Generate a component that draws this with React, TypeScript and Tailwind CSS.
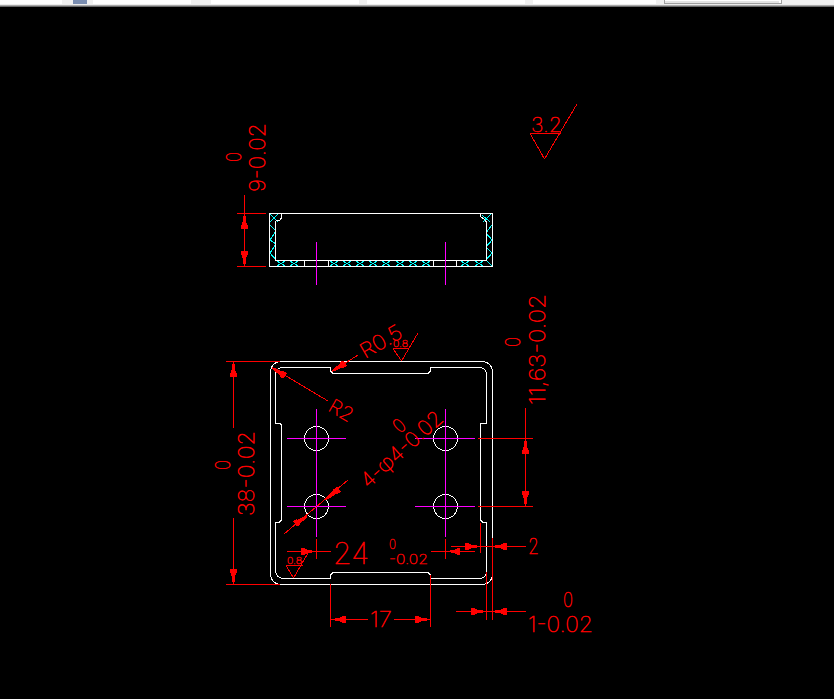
const RED = "#ff0000"
const WHITE = "#ffffff"
const MAGENTA = "#ff00ff"
const CYAN = "#00ffff"

type Pt = [number, number]

// head of a dimension line, thin at the tip and blocky at the back
function Arrow({ tip, back }: { tip: Pt; back: Pt }) {
  const dx = back[0] - tip[0]
  const dy = back[1] - tip[1]
  const len = Math.hypot(dx, dy)
  const nx = -dy / len
  const ny = dx / len
  const at = (t: number, w: number) => `${tip[0] + dx * t + nx * w},${tip[1] + dy * t + ny * w}`
  const points = [
    at(0, 0.5), at(0.3, 1.6), at(0.7, 2.2), at(0.72, 3), at(1, 3.4),
    at(1, -3.4), at(0.72, -3), at(0.7, -2.2), at(0.3, -1.6), at(0, -0.5),
  ].join(" ")
  return <polygon points={points} fill={RED} />
}

function Label({ x, y, cap, len, rotate = 0, children }: {
  x: number; y: number; cap: number; len: number; rotate?: number; children: string
}) {
  return (
    <text
      x={x}
      y={y}
      transform={rotate ? `rotate(${rotate} ${x} ${y})` : undefined}
      fontSize={cap / 0.727}
      textLength={len}
      lengthAdjust="spacingAndGlyphs"
      className="fill-[#ff0000] stroke-[#ff0000] stroke-[0.55px] font-['Inter',sans-serif] font-thin"
    >
      {children}
    </text>
  )
}

function Lines({ color, items }: { color: string; items: number[][] }) {
  return (
    <g stroke={color} strokeWidth={1} fill="none">
      {items.map((l, i) => (
        <line key={i} x1={l[0]} y1={l[1]} x2={l[2]} y2={l[3]} />
      ))}
    </g>
  )
}

const whiteTicks = [304.5, 328.5, 433.5, 456.5]
const hatchX = [281, 294, 334, 347, 360, 373, 386, 400, 413, 426, 465, 479]

const magenta = [
  [316.5, 242, 316.5, 285], [445.5, 242, 445.5, 285],
  [316.5, 409, 316.5, 537], [445.5, 409, 445.5, 537],
  [287, 438.5, 346, 438.5], [415, 438.5, 475, 438.5],
  [287, 506.5, 346, 506.5], [415, 506.5, 475, 506.5],
]

const red = [
  // height of the side view
  [244.5, 195, 244.5, 266], [237, 213.5, 266, 213.5], [237, 266.5, 266, 266.5],
  // 38 dimension
  [226, 361.5, 280, 361.5], [226, 584.5, 280, 584.5],
  [233.5, 361, 233.5, 428], [233.5, 518, 233.5, 584],
  // leaders
  [358, 355, 332, 371.5], [272, 367.5, 328, 401], [348, 480, 284, 534],
  // 11,63 dimension
  [478, 438.5, 533, 438.5], [478, 506.5, 533, 506.5], [525.5, 408, 525.5, 506],
  // 24 dimension
  [316.5, 539, 316.5, 559], [445.5, 539, 445.5, 559],
  [287, 551.5, 331, 551.5], [431, 551.5, 475, 551.5],
  // 17 dimension
  [330.5, 584, 330.5, 627], [430.5, 575, 430.5, 627],
  [330, 619.5, 368, 619.5], [394, 619.5, 430, 619.5],
  // 2 and 1 dimensions
  [451, 546.5, 526, 546.5], [480.5, 523, 480.5, 553],
  [492.5, 538, 492.5, 620], [486.5, 572, 486.5, 620],
  [456, 611.5, 526, 611.5],
  // roughness marks
  [530, 133.5, 561, 133.5], [530, 133.5, 544.5, 159], [544.5, 159, 577, 104],
  [393, 348.5, 409, 348.5], [393, 348.5, 401.5, 361], [401.5, 361, 418, 333],
  [286, 565.5, 303, 565.5], [286, 565.5, 293.5, 578], [293.5, 578, 308, 553],
]

const arrows: [Pt, Pt][] = [
  [[244.5, 214], [244.5, 229]], [[244.5, 266], [244.5, 251]],
  [[233.5, 362], [233.5, 377]], [[233.5, 584], [233.5, 569]],
  [[332, 371.5], [345, 363]], [[272, 367.5], [285, 376]],
  [[325, 500], [339, 489]], [[307, 516.5], [295, 524]],
  [[525.5, 439], [525.5, 454]], [[525.5, 506], [525.5, 491]],
  [[314, 551.5], [301, 551.5]], [[449, 551.5], [460, 551.5]],
  [[333, 619.5], [346, 619.5]], [[429, 619.5], [415, 619.5]],
  [[479, 546.5], [465, 546.5]], [[493, 546.5], [507, 546.5]],
  [[485, 611.5], [471, 611.5]], [[493, 611.5], [507, 611.5]],
]

const segments = [
  { w: "w-[62px]", white: true }, { w: "w-[11px]" },
  { w: "w-[14px]", blue: true }, { w: "w-[6px]" },
  { w: "w-[98px]", white: true }, { w: "w-[20px]" },
  { w: "w-[148px]", white: true }, { w: "w-[8px]" },
  { w: "w-[158px]", white: true }, { w: "w-[8px]" },
  { w: "w-[123px]", white: true }, { w: "w-[8px]" },
]

function Toolbar() {
  return (
    <div className="h-[7px] shrink-0 flex flex-col bg-[#f0f0f0]">
      <div className="h-[4px] flex">
        {segments.map((s, i) => (
          <div key={i} className={`${s.w} ${s.white ? "bg-white" : ""} ${s.blue ? "bg-[#7a8db0]" : ""}`} />
        ))}
        <div className="w-[118px] border-x border-b border-[#a0a0a0] bg-white">
          <div className="w-[98%] h-[2px] mt-[1px] bg-[#e4e4e4]" />
        </div>
      </div>
      <div className="h-px bg-[#ececec]" />
      <div className="h-px bg-[#a8a8a8]" />
      <div className="h-px bg-[#6a6a6a]" />
    </div>
  )
}

export default function App() {
  return (
    <div className="w-[834px] h-[699px] flex flex-col bg-black overflow-hidden">
      <Toolbar />
      <div className="flex-1">
        <svg width={834} height={692} viewBox="0 7 834 692" shapeRendering="crispEdges" className="block">
          {/* side view, hatch first */}
          <g stroke={CYAN} strokeWidth={1} fill="none">
            <path d="M270 225 L276 231 L270 240 L276 244 L270 253 L276 260 M270 214 L278 222 M278 214 L270 222" />
            <path d="M492 225 L486 233 L492 240 L486 247 L492 253 L486 260 L492 266 M482 215 L490 222 M491 214 L483 222" />
            {hatchX.map((x) => (
              <path key={x} d={`M${x - 4} 261 L${x + 4} 266 M${x + 4} 261 L${x - 4} 266`} />
            ))}
          </g>
          <g stroke={WHITE} strokeWidth={1} fill="none">
            <path d="M269.5 266.5 V213.5 H492.5 V266.5 Z" />
            <path d="M275.5 260.5 V222 L277 220 H280 L282 217 L281 214" />
            <path d="M275.5 260.5 H486.5 V222 L484 219 L481 217 L480 214" />
            {whiteTicks.map((x) => (
              <line key={x} x1={x} y1={260} x2={x} y2={266} />
            ))}
          </g>

          {/* plan view */}
          <g stroke={WHITE} strokeWidth={1} fill="none">
            <rect x={270.5} y={361.5} width={222} height={223} rx={10} />
            <path d="M283 367.5 H330.5 V371 L333 373.5 H428 L430.5 371 V367.5 H480 A7 7 0 0 1 486.5 374 V423.5 H480.5 V520 L483 522.5 H486.5 V572 A7 7 0 0 1 480 578.5 H430.5 V575 L428 572.5 H333 L330.5 575 V578.5 H283 A8 8 0 0 1 275.5 571 V522.5 H279 L281.5 520 V425 L280 423.5 H275.5 V374 A7 7 0 0 1 283 367.5 Z" />
            <circle cx={316.5} cy={438.5} r={12} />
            <circle cx={445.5} cy={438.5} r={12} />
            <circle cx={316.5} cy={506.5} r={12} />
            <circle cx={445.5} cy={506.5} r={12} />
          </g>

          <Lines color={MAGENTA} items={magenta} />
          <Lines color={RED} items={red} />
          {arrows.map(([tip, back], i) => (
            <Arrow key={i} tip={tip} back={back} />
          ))}

          <Label x={265} y={192} cap={16} len={69} rotate={-90}>9-0.02</Label>
          <Label x={241} y={162} cap={15} len={10} rotate={-90}>0</Label>
          <Label x={531} y={132} cap={15} len={31}>3.2</Label>
          <Label x={365} y={359} cap={15} len={45} rotate={-30}>R0.5</Label>
          <Label x={393} y={347} cap={7} len={15}>0.8</Label>
          <Label x={327} y={410} cap={14} len={25} rotate={30}>R2</Label>
          <Label x={368} y={489} cap={15} len={103} rotate={-42}>4-φ4-0.02</Label>
          <Label x={400} y={434} cap={14} len={10} rotate={-42}>0</Label>
          <Label x={254} y={516} cap={16} len={85} rotate={-90}>38-0.02</Label>
          <Label x={230} y={470} cap={15} len={10} rotate={-90}>0</Label>
          <Label x={545} y={405} cap={16} len={111} rotate={-90}>11,63-0.02</Label>
          <Label x={520} y={347} cap={15} len={10} rotate={-90}>0</Label>
          <Label x={333} y={564} cap={22} len={36}>24</Label>
          <Label x={389} y={549} cap={10} len={7}>0</Label>
          <Label x={389} y={564} cap={10} len={39}>-0.02</Label>
          <Label x={287} y={564} cap={7} len={15}>0.8</Label>
          <Label x={528} y={554} cap={16} len={11}>2</Label>
          <Label x={563} y={607} cap={15} len={10}>0</Label>
          <Label x={528} y={632} cap={16} len={65}>1-0.02</Label>
          <Label x={370} y={627} cap={16} len={22}>17</Label>
        </svg>
      </div>
    </div>
  )
}
